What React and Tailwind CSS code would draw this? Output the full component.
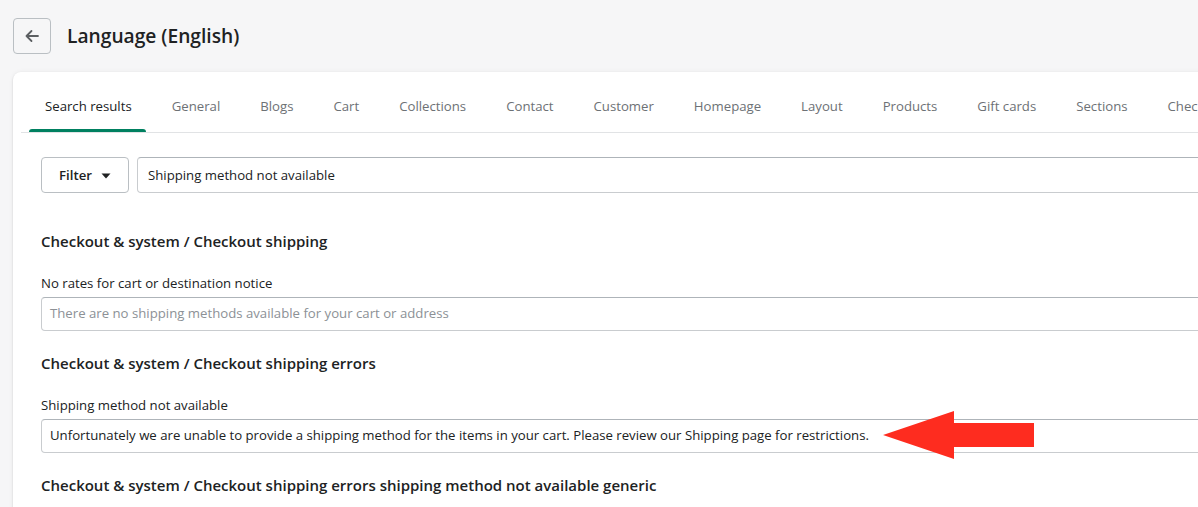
import React from "react";

const tabs = ["Search results","General","Blogs","Cart","Collections","Contact","Customer","Homepage","Layout","Products","Gift cards","Sections","Checkout & system"];

function Field({ label, value, placeholder }) {
  return (
    <div className="flex flex-col">
      <div className="text-[13.2px] leading-[20px] text-[#202223] mb-[4px]">{label}</div>
      <div className="h-[34px] rounded-[4px] border border-[#c9cccf] border-t-[#aeb4b9] flex items-center px-[8px] bg-white">
        <span className={"text-[13.2px] whitespace-nowrap " + (value ? "text-[#202223]" : "text-[#8c9196]")}>{value || placeholder}</span>
      </div>
    </div>
  );
}

export default function App() {
  return (
    <div className="relative w-[1198px] h-[507px] overflow-hidden bg-[#f6f6f7]" style={{ fontFamily: '"Open Sans", "Noto Sans", sans-serif' }}>
      <div className="flex items-center h-[72px] pl-[13px] gap-[16px]">
        <button className="w-[38px] h-[36px] rounded-[4px] border border-[#babfc3] flex items-center justify-center bg-transparent">
          <svg width="20" height="20" viewBox="0 0 20 20" fill="none">
            <path d="M16 10H4.5M9.5 5L4.5 10L9.5 15" stroke="#5c5f62" strokeWidth="1.8" strokeLinecap="round" strokeLinejoin="round" />
          </svg>
        </button>
        <h1 className="text-[19.2px] font-semibold text-[#202223] leading-[28px]">Language (English)</h1>
      </div>
      <div className="ml-[13px] w-[1240px] bg-white rounded-t-[8px] shadow-[0_0_5px_rgba(23,24,24,0.05),0_1px_2px_rgba(0,0,0,0.15)] h-[460px]">
        <div className="mx-[8px] pt-[8px] border-b border-[#e1e3e5] flex gap-[8px] pl-[8px]">
          {tabs.map((t, i) => (
            <div key={t} className="relative h-[52px] flex items-center pt-[2px] px-[16px] whitespace-nowrap">
              <span className={"text-[13.2px] " + (i === 0 ? "text-[#202223]" : "text-[#6d7175]")}>{t}</span>
              {i === 0 && <div className="absolute left-0 right-[2px] bottom-0 h-[3px] rounded-t-[3px] bg-[#008060]" />}
            </div>
          ))}
        </div>
        <div className="pl-[28px] pt-[24px] flex flex-col">
          <div className="flex gap-[8px]">
            <button className="h-[36px] w-[88px] rounded-[4px] border border-[#babfc3] flex items-center justify-center gap-[9px] pt-[1px] bg-white">
              <span className="text-[13.2px] font-semibold text-[#202223]">Filter</span>
              <svg width="10" height="6" viewBox="0 0 10 6"><path d="M0.5 0.5H9.5L5 5.5Z" fill="#202223" /></svg>
            </button>
            <div className="flex-1 h-[36px] rounded-[4px] border border-[#c9cccf] border-t-[#aeb4b9] flex items-center px-[10px] pt-[1px]">
              <span className="text-[13.2px] text-[#202223]">Shipping method not available</span>
            </div>
          </div>
          <h2 className="mt-[37px] text-[15px] font-semibold text-[#202223] leading-[22px]">Checkout &amp; system / Checkout shipping</h2>
          <div className="mt-[21px]">
            <Field label="No rates for cart or destination notice" placeholder="There are no shipping methods available for your cart or address" />
          </div>
          <h2 className="mt-[21px] text-[15px] font-semibold text-[#202223] leading-[22px]">Checkout &amp; system / Checkout shipping errors</h2>
          <div className="mt-[21px]">
            <Field label="Shipping method not available" value="Unfortunately we are unable to provide a shipping method for the items in your cart. Please review our Shipping page for restrictions." />
          </div>
          <h2 className="mt-[21px] text-[15px] font-semibold text-[#202223] leading-[22px]">Checkout &amp; system / Checkout shipping errors shipping method not available generic</h2>
        </div>
      </div>
      <svg className="absolute left-[883px] top-[410px]" width="152" height="50" viewBox="0 0 152 50">
        <path d="M0 25L71 1V13H151V37H71V49Z" fill="#fe2c1f" />
      </svg>
    </div>
  );
}
